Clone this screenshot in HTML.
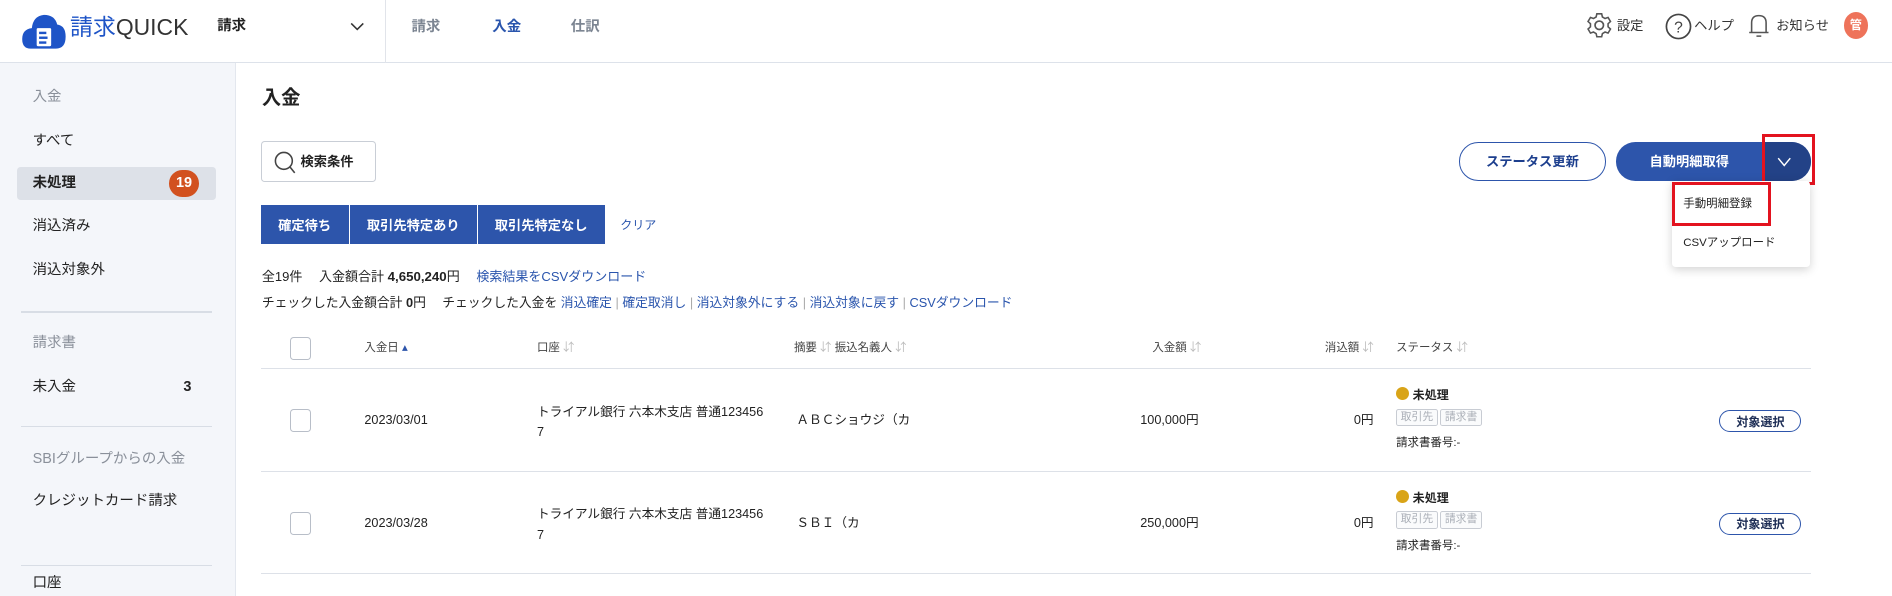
<!DOCTYPE html>
<html><head><meta charset="utf-8"><style>
*{box-sizing:border-box;margin:0;padding:0}
html,body{width:1892px;height:596px;overflow:hidden;background:#fff}
#w{zoom:1.20663;width:1568px;height:494px;position:relative;font-family:"Liberation Sans","Noto Sans CJK JP",sans-serif;color:#222;font-size:12px}
.a{position:absolute;white-space:nowrap;line-height:16px}
.blue{color:#2a55ad}
.hdr{position:absolute;left:0;top:0;width:1568px;height:52px;border-bottom:1px solid #dde2ea;background:#fff}
.side{position:absolute;left:0;top:52px;width:196px;height:442px;background:#f4f6fa;border-right:1px solid #e3e7ee}
.sep{position:absolute;left:17px;width:159px;height:1px;background:#d8dde5}
.gray{color:#8a909a}
.btn{position:absolute;background:#2d55ab;color:#fff;font-weight:bold;font-size:11px;display:flex;align-items:center;justify-content:center}
.cb{position:absolute;width:18px;height:19px;border:1.5px solid #b8bec8;border-radius:3px;background:#fff}
.tag{display:inline-block;border:1px solid #c8ccd3;color:#a9aeb6;font-size:9px;padding:0 3px;border-radius:2px;line-height:13px;margin-right:2px;background:#fafbfc}
.pill{position:absolute;border:1.5px solid #2d55ab;border-radius:10px;color:#1d2d55;font-size:10px;font-weight:bold;display:flex;align-items:center;justify-content:center}
.rb{position:absolute;border:3px solid #e3131f}
.fc{display:flex;align-items:center;justify-content:center}
</style></head><body><div id="w">
<div class="hdr">
<svg class="a" style="left:17px;top:8px" width="38" height="34" viewBox="0 0 38 34"><path d="M8 32 Q1 32 1 24 Q1 16 9 15 Q10 5 19 4 Q28 4 30 12 Q37 13 37 22 Q37 32 29 32 Z" fill="#1e54c7"/><rect x="13" y="15" width="12" height="15" rx="1" fill="#fff"/><rect x="15" y="18" width="6" height="2" fill="#1e54c7"/><rect x="15" y="22" width="7" height="2" fill="#1e54c7"/><rect x="15" y="26" width="6" height="2" fill="#1e54c7"/></svg>
<div class="a" style="left:58px;top:12px;font-size:19px;line-height:22px"><span style="color:#1e54c7">請求</span><span style="color:#333">QUICK</span></div>
<div class="a" style="left:180px;top:14px;font-size:12px;font-weight:bold">請求</div>
<svg class="a" style="left:290px;top:17px" width="12" height="10"><path d="M1 2 L6 7 L11 2" stroke="#333" stroke-width="1.3" fill="none"/></svg>
<div class="a" style="left:319px;top:0;width:1px;height:52px;background:#e1e4ea"></div>
<div class="a" style="left:341px;top:15px;font-size:12px;font-weight:bold;color:#7c8592">請求</div>
<div class="a blue" style="left:408px;top:15px;font-size:12px;font-weight:bold">入金</div>
<div class="a" style="left:473px;top:15px;font-size:12px;font-weight:bold;color:#7c8592">仕訳</div>
<svg class="a" style="left:1314px;top:10px" width="22" height="22" viewBox="0 0 22 22"><circle cx="11" cy="11" r="3.5" fill="none" stroke="#555" stroke-width="1.4"/><path d="M9 1.5h4l.6 2.6 2.2 1.3 2.5-.9 2 3.4-2 1.8v2.6l2 1.8-2 3.4-2.5-.9-2.2 1.3-.6 2.6H9l-.6-2.6-2.2-1.3-2.5.9-2-3.4 2-1.8V9.7l-2-1.8 2-3.4 2.5.9 2.2-1.3z" fill="none" stroke="#555" stroke-width="1.3"/></svg>
<div class="a" style="left:1340px;top:13px;font-size:11px;color:#333">設定</div>
<svg class="a" style="left:1379px;top:10px" width="24" height="24"><circle cx="12" cy="12" r="10" fill="none" stroke="#444" stroke-width="1.4"/><text x="12" y="17" text-anchor="middle" font-size="13" fill="#444" font-family="Liberation Sans">?</text></svg>
<div class="a" style="left:1404px;top:13px;font-size:11px;color:#333">ヘルプ</div>
<svg class="a" style="left:1449px;top:10px" width="18" height="24"><path d="M3 17 V9 Q3 3 9 3 Q15 3 15 9 V17 Z M1 17 H17 M7 20 H11" fill="none" stroke="#555" stroke-width="1.3"/></svg>
<div class="a" style="left:1472px;top:13px;font-size:11px;color:#333">お知らせ</div>
<div class="a fc" style="left:1528px;top:10px;width:20px;height:22px;border-radius:50%;background:#ee735a;color:#fff;font-size:10px;font-weight:bold">管</div>
</div>
<div class="side">
<div class="a gray" style="left:27px;top:21px">入金</div>
<div class="a" style="left:27px;top:57px">すべて</div>
<div class="a" style="left:14px;top:86px;width:165px;height:28px;background:#dde1e8;border-radius:3px"></div>
<div class="a" style="left:27px;top:92px;font-weight:bold">未処理</div>
<div class="a fc" style="left:140px;top:89px;width:25px;height:22px;border-radius:11px;background:#d2511f;color:#fff;font-weight:bold">19</div>
<div class="a" style="left:27px;top:128px">消込済み</div>
<div class="a" style="left:27px;top:164px">消込対象外</div>
<div class="sep" style="top:206px"></div>
<div class="a gray" style="left:27px;top:225px">請求書</div>
<div class="a" style="left:27px;top:261px">未入金</div>
<div class="a" style="left:152px;top:261px;font-weight:bold">3</div>
<div class="sep" style="top:301px"></div>
<div class="a gray" style="left:27px;top:321px">SBIグループからの入金</div>
<div class="a" style="left:27px;top:356px">クレジットカード請求</div>
<div class="sep" style="top:416px"></div>
<div class="a" style="left:27px;top:424px">口座</div>
</div>
<div class="a" style="left:217px;top:72px;font-size:16px;font-weight:bold;line-height:20px">入金</div>
<div class="a" style="left:216px;top:117px;width:96px;height:34px;border:1px solid #c9ced6;border-radius:3px;background:#fff"></div>
<svg class="a" style="left:226px;top:124px" width="20" height="22"><circle cx="9" cy="9" r="7" fill="none" stroke="#444" stroke-width="1.3"/><path d="M14 14 L18 19" stroke="#444" stroke-width="1.3"/></svg>
<div class="a" style="left:249px;top:126px;font-weight:bold;font-size:11px">検索条件</div>
<div class="btn" style="left:216px;top:170px;width:73px;height:32px">確定待ち</div>
<div class="btn" style="left:290px;top:170px;width:105px;height:32px">取引先特定あり</div>
<div class="btn" style="left:396px;top:170px;width:105px;height:32px">取引先特定なし</div>
<div class="a blue" style="left:514px;top:179px;font-size:10px">クリア</div>
<div class="a" style="left:217px;top:221px;font-size:10.8px">全19件　 入金額合計 <b style="font-size:11px">4,650,240</b>円　 <span class="blue">検索結果をCSVダウンロード</span></div>
<div class="a" style="left:217px;top:243px;font-size:10.6px">チェックした入金額合計 <b>0</b>円　 チェックした入金を <span class="blue">消込確定</span> <span style="color:#aaa">|</span> <span class="blue">確定取消し</span> <span style="color:#aaa">|</span> <span class="blue">消込対象外にする</span> <span style="color:#aaa">|</span> <span class="blue">消込対象に戻す</span> <span style="color:#aaa">|</span> <span class="blue">CSVダウンロード</span></div>
<div class="a fc" style="left:1209px;top:118px;width:122px;height:32px;border:1.5px solid #2d55ab;border-radius:16px;color:#1d3f8e;font-weight:bold;font-size:11px">ステータス更新</div>
<div class="a" style="left:1339px;top:118px;width:162px;height:32px;border-radius:16px;background:#2d55ab;overflow:hidden"><div class="a" style="left:122px;top:0;width:40px;height:32px;background:#234287"></div></div>
<div class="a fc" style="left:1339px;top:118px;width:122px;height:32px;color:#fff;font-weight:bold;font-size:11px">自動明細取得</div>
<svg class="a" style="left:1473px;top:130px" width="12" height="9"><path d="M1 1 L6 7 L11 1" stroke="#fff" stroke-width="1.2" fill="none"/></svg>
<div class="rb" style="left:1460px;top:111px;width:44px;height:42px"></div>
<div class="a" style="left:1386px;top:150px;width:114px;height:71px;background:#fff;border-radius:3px;box-shadow:0 2px 8px rgba(0,0,0,.18)"></div>
<div class="a" style="left:1395px;top:162px;font-size:9.5px">手動明細登録</div>
<div class="a" style="left:1395px;top:194px;font-size:9.5px">CSVアップロード</div>
<div class="rb" style="left:1386px;top:151px;width:82px;height:36px"></div>
<div class="cb" style="left:240px;top:279px"></div>
<div class="a" style="left:302px;top:281px;font-size:9.5px;color:#444">入金日 <span style="color:#2d55ab">▴</span></div>
<div class="a" style="left:445px;top:281px;font-size:9.5px;color:#444">口座 <span style="color:#bbb">⇵</span></div>
<div class="a" style="left:658px;top:281px;font-size:9.5px;color:#444">摘要 <span style="color:#bbb">⇵</span> 振込名義人 <span style="color:#bbb">⇵</span></div>
<div class="a" style="left:955px;top:281px;font-size:9.5px;color:#444">入金額 <span style="color:#bbb">⇵</span></div>
<div class="a" style="left:1098px;top:281px;font-size:9.5px;color:#444">消込額 <span style="color:#bbb">⇵</span></div>
<div class="a" style="left:1157px;top:281px;font-size:9.5px;color:#444">ステータス <span style="color:#bbb">⇵</span></div>
<div class="a" style="left:216px;top:305px;width:1285px;height:1px;background:#dde1e8"></div>
<div class="a" style="left:216px;top:390px;width:1285px;height:1px;background:#dde1e8"></div>
<div class="a" style="left:216px;top:475px;width:1285px;height:1px;background:#dde1e8"></div>
<div>
<div class="cb" style="left:240px;top:339px"></div>
<div class="a" style="left:302px;top:341px;font-size:10.5px">2023/03/01</div>
<div class="a" style="left:445px;top:333px;font-size:10.5px;line-height:17px">トライアル銀行 六本木支店 普通123456<br>7</div>
<div class="a" style="left:660px;top:341px;font-size:10.5px">ＡＢＣショウジ（カ</div>
<div class="a" style="left:945px;top:341px;font-size:10.5px">100,000円</div>
<div class="a" style="left:1122px;top:341px;font-size:10.5px">0円</div>
<div class="a" style="left:1157px;top:320px;font-size:10px;font-weight:bold"><span style="display:inline-block;width:11px;height:11px;border-radius:50%;background:#d9a418;vertical-align:-1px"></span> 未処理</div>
<div class="a" style="left:1157px;top:337px"><span class="tag">取引先</span><span class="tag">請求書</span></div>
<div class="a" style="left:1157px;top:360px;font-size:9.5px">請求書番号:-</div>
<div class="pill" style="left:1425px;top:340px;width:68px;height:18px">対象選択</div>
</div>
<div>
<div class="cb" style="left:240px;top:424px"></div>
<div class="a" style="left:302px;top:426px;font-size:10.5px">2023/03/28</div>
<div class="a" style="left:445px;top:418px;font-size:10.5px;line-height:17px">トライアル銀行 六本木支店 普通123456<br>7</div>
<div class="a" style="left:660px;top:426px;font-size:10.5px">ＳＢＩ（カ</div>
<div class="a" style="left:945px;top:426px;font-size:10.5px">250,000円</div>
<div class="a" style="left:1122px;top:426px;font-size:10.5px">0円</div>
<div class="a" style="left:1157px;top:405px;font-size:10px;font-weight:bold"><span style="display:inline-block;width:11px;height:11px;border-radius:50%;background:#d9a418;vertical-align:-1px"></span> 未処理</div>
<div class="a" style="left:1157px;top:422px"><span class="tag">取引先</span><span class="tag">請求書</span></div>
<div class="a" style="left:1157px;top:445px;font-size:9.5px">請求書番号:-</div>
<div class="pill" style="left:1425px;top:425px;width:68px;height:18px">対象選択</div>
</div>
</div></body></html>
